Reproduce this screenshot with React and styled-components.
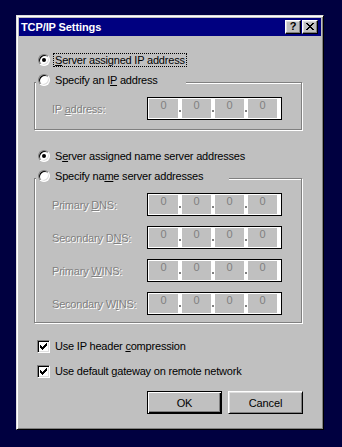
import styled, { createGlobalStyle } from 'styled-components';

const GlobalStyle = createGlobalStyle`
  html, body {
    margin: 0;
    padding: 0;
    background: #000040;
  }
  body {
    font-family: 'Liberation Sans', Arial, sans-serif;
    font-size: 11px;
    color: #000;
  }
  * {
    box-sizing: border-box;
  }
`;

const CloseGlyph = () => (
  <svg width="8" height="7" viewBox="0 0 8 7" shapeRendering="crispEdges">
    <path
      fill="#000"
      d="M0 0h2v1H0zM6 0h2v1H6zM1 1h2v1H1zM5 1h2v1H5zM2 2h4v1H2zM3 3h2v1H3zM2 4h4v1H2zM1 5h2v1H1zM5 5h2v1H5zM0 6h2v1H0zM6 6h2v1H6z"
    />
  </svg>
);

const CheckGlyph = () => (
  <svg width="7" height="7" viewBox="0 0 7 7" shapeRendering="crispEdges">
    <path
      fill="#000"
      d="M0 2h1v3H0zM1 3h1v3H1zM2 4h1v3H2zM3 3h1v3H3zM4 2h1v3H4zM5 1h1v3H5zM6 0h1v3H6z"
    />
  </svg>
);

const IpField = () => (
  <IpBox>
    {[0, 1, 2, 3].map((i) => (
      <IpPart key={i}>
        {i > 0 && (
          <IpSeparator>
            <IpDot />
          </IpSeparator>
        )}
        <Octet>0</Octet>
      </IpPart>
    ))}
  </IpBox>
);

const App = () => {
  const nameServers = [
    { id: 1, before: 'Primary ', key: 'D', after: 'NS:' },
    { id: 2, before: 'Secondary D', key: 'N', after: 'S:' },
    { id: 3, before: 'Primary ', key: 'W', after: 'INS:' },
    { id: 4, before: 'Secondary W', key: 'I', after: 'NS:' },
  ];

  return (
    <>
      <GlobalStyle />
      <Desktop>
        <Dialog>
          <TitleBar>
            <TitleText>TCP/IP Settings</TitleText>
            <CaptionButton>?</CaptionButton>
            <CaptionButton>
              <CloseGlyph />
            </CaptionButton>
          </TitleBar>

          <Content>
            <OptionRow $top={17} $indent={19}>
              <Radio>
                <RadioDot />
              </Radio>
              <OptionLabel $focused>
                <Accel>S</Accel>erver assigned IP address
              </OptionLabel>
            </OptionRow>

            <Group $top={6} $bottom={9}>
              <GroupLegend $width={150}>
                <LegendInner>
                  <Radio $inLegend />
                  <OptionLabel>
                    Specify an I<Accel>P</Accel> address
                  </OptionLabel>
                </LegendInner>
              </GroupLegend>
              <GroupBody $gap={10}>
                <FieldRow>
                  <FieldLabel>
                    IP <Accel>a</Accel>ddress:
                  </FieldLabel>
                  <IpField />
                </FieldRow>
              </GroupBody>
            </Group>

            <OptionRow $top={19} $indent={19}>
              <Radio>
                <RadioDot />
              </Radio>
              <OptionLabel>
                S<Accel>e</Accel>rver assigned name server addresses
              </OptionLabel>
            </OptionRow>

            <Group $top={6} $bottom={7}>
              <GroupLegend $width={193}>
                <LegendInner>
                  <Radio $inLegend />
                  <OptionLabel>
                    Specify na<Accel>m</Accel>e server addresses
                  </OptionLabel>
                </LegendInner>
              </GroupLegend>
              <GroupBody $gap={10}>
                {nameServers.map((ns) => (
                  <FieldRow key={ns.id}>
                    <FieldLabel>
                      {ns.before}
                      <Accel>{ns.key}</Accel>
                      {ns.after}
                    </FieldLabel>
                    <IpField />
                  </FieldRow>
                ))}
              </GroupBody>
            </Group>

            <OptionRow $top={16} $indent={18}>
              <Checkbox>
                <CheckGlyph />
              </Checkbox>
              <OptionLabel>
                Use IP header <Accel>c</Accel>ompression
              </OptionLabel>
            </OptionRow>

            <OptionRow $top={11} $indent={18}>
              <Checkbox>
                <CheckGlyph />
              </Checkbox>
              <OptionLabel>
                Use default <Accel>g</Accel>ateway on remote network
              </OptionLabel>
            </OptionRow>

            <ButtonRow>
              <PushButton $default>OK</PushButton>
              <PushButton>Cancel</PushButton>
            </ButtonRow>
          </Content>
        </Dialog>
      </Desktop>
    </>
  );
};

export default App;

const Desktop = styled.div`
  min-height: 447px;
  padding: 15px 0 0 16px;
`;

const Dialog = styled.div`
  width: 308px;
  height: 415px;
  background-color: #c0c0c0;
  border: 1px solid;
  border-color: #dfdfdf #000 #000 #dfdfdf;
  box-shadow: inset 1px 1px 0 #fff, inset -1px -1px 0 #808080;
  padding: 2px;
  display: flex;
  flex-direction: column;
`;

const TitleBar = styled.div`
  height: 18px;
  background-color: #000080;
  display: flex;
  align-items: center;
  gap: 1px;
  padding: 0 3px 0 2px;
`;

const TitleText = styled.div`
  flex: 1;
  color: #fff;
  font-weight: bold;
  font-size: 11px;
  letter-spacing: -0.1px;
  white-space: nowrap;
`;

const CaptionButton = styled.div`
  width: 16px;
  height: 14px;
  background-color: #c0c0c0;
  border: 1px solid;
  border-color: #fff #000 #000 #fff;
  box-shadow: inset -1px -1px 0 #808080, inset 1px 1px 0 #dfdfdf;
  display: flex;
  align-items: center;
  justify-content: center;
  font-weight: bold;
  font-size: 11px;
  line-height: 11px;
  padding-bottom: 1px;
`;

const Content = styled.div`
  flex: 1;
  display: flex;
  flex-direction: column;
`;

const OptionRow = styled.div`
  display: flex;
  align-items: flex-start;
  margin-top: ${(p) => p.$top}px;
  margin-left: ${(p) => p.$indent}px;
`;

const Radio = styled.div`
  width: 12px;
  height: 12px;
  flex-shrink: 0;
  margin-top: 1px;
  margin-left: ${(p) => (p.$inLegend ? 2 : 0)}px;
  border-radius: 50%;
  background-color: #fff;
  border: 1px solid;
  border-color: #808080 #fff #fff #808080;
  box-shadow: inset 1px 1px 0 #000, inset -1px -1px 0 #dfdfdf;
  display: flex;
  align-items: center;
  justify-content: center;
`;

const RadioDot = styled.span`
  width: 4px;
  height: 4px;
  border-radius: 50%;
  background-color: #000;
`;

const Checkbox = styled.div`
  width: 13px;
  height: 13px;
  flex-shrink: 0;
  margin-top: 1px;
  background-color: #fff;
  border: 1px solid;
  border-color: #808080 #fff #fff #808080;
  box-shadow: inset 1px 1px 0 #000, inset -1px -1px 0 #dfdfdf;
  display: flex;
  align-items: center;
  justify-content: center;
`;

const OptionLabel = styled.span`
  margin-left: 3px;
  padding: 0 1px;
  border: 1px dotted ${(p) => (p.$focused ? '#000' : 'transparent')};
  line-height: 12px;
  letter-spacing: -0.2px;
  white-space: nowrap;
`;

const Accel = styled.span`
  text-decoration: underline;
`;

const Group = styled.fieldset`
  width: 268px;
  min-width: 0;
  margin: ${(p) => p.$top}px 0 0 15px;
  padding: 5px 0 ${(p) => p.$bottom}px 0;
  border: 1px solid #808080;
  box-shadow: inset 1px 1px 0 #fff, 1px 1px 0 #fff;
`;

const GroupLegend = styled.legend`
  width: ${(p) => p.$width}px;
  height: 19px;
  margin-left: 1px;
  padding: 0;
  background-color: #c0c0c0;
`;

const LegendInner = styled.div`
  display: flex;
  align-items: flex-start;
`;

const GroupBody = styled.div`
  display: flex;
  flex-direction: column;
  gap: ${(p) => p.$gap}px;
  padding-left: 17px;
`;

const FieldRow = styled.div`
  display: flex;
  align-items: center;
`;

const FieldLabel = styled.span`
  width: 95px;
  color: #808080;
  text-shadow: 1px 1px 0 #fff;
  letter-spacing: -0.2px;
  white-space: nowrap;
`;

const IpBox = styled.div`
  width: 135px;
  height: 23px;
  display: flex;
  background-color: #fff;
  border: 1px solid #000;
  padding: 1px 4px 1px 1px;
`;

const IpPart = styled.div`
  display: flex;
`;

const IpSeparator = styled.div`
  width: 4px;
  display: flex;
  justify-content: center;
  padding-top: 11px;
`;

const IpDot = styled.span`
  width: 2px;
  height: 2px;
  background-color: #808080;
`;

const Octet = styled.div`
  width: 29px;
  background-color: #c0c0c0;
  color: #808080;
  text-align: center;
  font-size: 11px;
  line-height: 13px;
`;

const ButtonRow = styled.div`
  display: flex;
  justify-content: flex-end;
  gap: 6px;
  margin-top: 13px;
  margin-right: 18px;
`;

const PushButton = styled.div`
  width: 75px;
  height: 23px;
  background-color: #c0c0c0;
  border: 1px solid;
  border-color: ${(p) => (p.$default ? '#000' : '#fff #000 #000 #fff')};
  box-shadow: ${(p) =>
    p.$default
      ? 'inset 1px 1px 0 #fff, inset -1px -1px 0 #000, inset -2px -2px 0 #808080'
      : 'inset 1px 1px 0 #dfdfdf, inset -1px -1px 0 #808080'};
  display: flex;
  align-items: center;
  justify-content: center;
  font-size: 11px;
  letter-spacing: -0.1px;
`;
